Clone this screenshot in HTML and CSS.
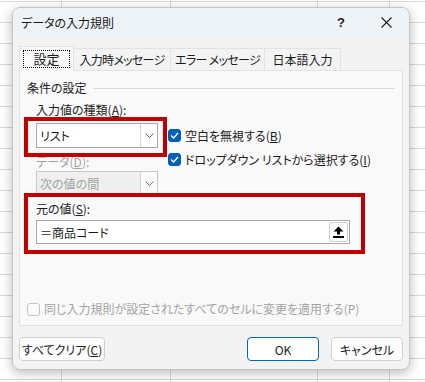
FILE: index.html
```html
<!DOCTYPE html>
<html lang="ja">
<head>
  <meta charset="UTF-8" />
  <meta name="viewport" content="width=device-width, initial-scale=1.0">
  <title>データの入力規則</title>
  <link rel="stylesheet" href="styles.css">
</head>
<body>

<div class="dialog">
  <div class="titlebar">
    <span class="title">データの入力規則</span>
    <span class="help">?</span>
    <span class="close">
      <svg width="11" height="11" viewBox="0 0 11 11"><path d="M0.5 0.5 L10.5 10.5 M10.5 0.5 L0.5 10.5" stroke="#1b1b1b" stroke-width="1.1" fill="none"/></svg>
    </span>
  </div>

  <div class="body">
    <div class="tabs">
      <div class="tab active"><span class="focus">設定</span></div>
      <div class="tab tab-input">入力時メッセージ</div>
      <div class="tab tab-error">エラー メッセージ</div>
      <div class="tab tab-ime">日本語入力</div>
    </div>

    <div class="panel">
      <div class="group-title"><span>条件の設定</span></div>

      <div class="criteria">
        <div class="lbl lbl-type">入力値の種類(<u>A</u>):</div>
        <div class="combo combo-type">
          <span class="combo-text">リスト</span>
          <span class="combo-btn">
            <svg width="9" height="5" viewBox="0 0 9 5"><path d="M0.5 0.5 L4.5 4.5 L8.5 0.5" stroke="#606060" fill="none"/></svg>
          </span>
        </div>
        <div class="checks">
          <div class="check-row">
            <span class="box checked"><svg width="9" height="7" viewBox="0 0 9 7"><path d="M1 3.5 L3.5 6 L8 1" stroke="#fff" stroke-width="1.4" fill="none"/></svg></span>
            <span>空白を無視する(<u>B</u>)</span>
          </div>
          <div class="check-row">
            <span class="box checked"><svg width="9" height="7" viewBox="0 0 9 7"><path d="M1 3.5 L3.5 6 L8 1" stroke="#fff" stroke-width="1.4" fill="none"/></svg></span>
            <span>ドロップダウン リストから選択する(<u>I</u>)</span>
          </div>
        </div>
        <div class="lbl lbl-data disabled">データ(<u>D</u>):</div>
        <div class="combo combo-data disabled">
          <span class="combo-text">次の値の間</span>
          <span class="combo-btn">
            <svg width="9" height="5" viewBox="0 0 9 5"><path d="M0.5 0.5 L4.5 4.5 L8.5 0.5" stroke="#707070" fill="none"/></svg>
          </span>
        </div>
      </div>

      <div class="source">
        <div class="lbl">元の値(<u>S</u>):</div>
        <div class="field">
          <span class="field-text">＝商品コード</span>
          <span class="ref-btn">
            <svg width="11" height="12" viewBox="0 0 11 12"><polygon points="5.5,0.5 10.5,5.5 7,5.5 7,8.5 4,8.5 4,5.5 0.5,5.5" fill="#000"/><rect x="0" y="10" width="11" height="2" fill="#000"/></svg>
          </span>
        </div>
      </div>

      <div class="apply-all disabled">
        <span class="box"></span>
        <span>同じ入力規則が設定されたすべてのセルに変更を適用する(P)</span>
      </div>

      <div class="mark mark-type"></div>
      <div class="mark mark-source"></div>
    </div>

    <div class="buttons">
      <button class="btn btn-clear">すべてクリア(<u>C</u>)</button>
      <button class="btn btn-ok">OK</button>
      <button class="btn btn-cancel">キャンセル</button>
    </div>
  </div>
</div>

</body>
</html>
```

FILE: styles.css
```css
* { margin: 0; padding: 0; box-sizing: border-box; }
html, body {
  height: 100%;
  overflow: hidden;
}

body {
  font-family: "Noto Sans CJK JP", "Noto Sans", sans-serif;
  font-feature-settings: "palt" 1;
  font-size: 12px;
  color: #1b1b1b;
  background-color: #fff;
  /* spreadsheet grid behind the dialog */
  background-image:
    linear-gradient(#dadada, #dadada),
    linear-gradient(#dadada, #dadada),
    linear-gradient(#dadada, #dadada),
    linear-gradient(#dadada, #dadada),
    repeating-linear-gradient(#dadada 0 1px, transparent 1px 21px);
  background-size: 1px 100%, 1px 100%, 1px 100%, 1px 100%, 100% 100%;
  background-position: 61px 0, 170px 0, 317px 0, 389px 0, 0 1px;
  background-repeat: no-repeat, no-repeat, no-repeat, no-repeat, repeat;
}

.dialog {
  margin: 7px 0 0 12px;
  width: 398px;
  height: 363px;
  background: #f3f3f3;
  border: 1px solid #c6c6c6;
  border-radius: 8px;
  box-shadow: 0 3px 12px rgba(0,0,0,0.28);
  overflow: hidden;
}

.titlebar {
  height: 29px;
  background: #eef3f7;
  display: flex;
  align-items: center;
  padding-left: 8px;
}
.title { flex: 1; }
.help {
  width: 16px;
  text-align: center;
  font-family: "Liberation Sans", sans-serif;
  font-size: 13px;
  font-weight: bold;
  margin-right: 32px;
}
.close {
  width: 11px;
  height: 11px;
  display: flex;
  margin-right: 17px;
}

.body {
  padding: 9px 0 0 6px;
}

.tabs {
  display: flex;
  align-items: flex-end;
  height: 24px;
}
.tab {
  height: 22px;
  line-height: 21px;
  text-align: center;
  letter-spacing: -0.7px;
  background: #f3f3f3;
  border: 1px solid #e2e2e2;
  border-bottom: none;
  margin-right: -1px;
  white-space: nowrap;
}
.tab-input { width: 98px; }
.tab-error { width: 95px; }
.tab-ime { width: 77px; letter-spacing: 0; }
.tab.active {
  height: 25px;
  margin-bottom: -1px;
  width: 55px;
  padding: 3px 3px 0;
  letter-spacing: 0;
  background: #f9f9f9;
  position: relative;
  z-index: 1;
}
.focus {
  display: block;
  height: 18px;
  line-height: 16px;
  text-align: center;
  border: 1px dotted #000;
  font-size: 13px;
}

.panel {
  position: relative;
  width: 384px;
  height: 256px;
  background: #f9f9f9;
  border: 1px solid #e2e2e2;
  padding-top: 9px;
}

.group-title {
  display: flex;
  align-items: center;
  padding-left: 7px;
  line-height: 16px;
  gap: 6px;
}
.group-title::after {
  content: "";
  flex: 1;
  height: 1px;
  background: #dcdcdc;
  margin-right: 7px;
}

.lbl { line-height: 16px; white-space: nowrap; }
.disabled { color: #a3a3a3; }

.criteria {
  display: grid;
  grid-template-columns: 122px auto;
  column-gap: 10px;
  padding-left: 16px;
  margin-top: 6px;
}
.lbl-type { grid-column: 1 / 3; margin-bottom: 5px; }
.checks { grid-column: 2; grid-row: 2 / 4; }
.lbl-data { grid-column: 1; padding: 5px 0 1px; }
.combo-data { grid-column: 1; }

.combo {
  height: 25px;
  display: flex;
  background: #fff;
  border: 1px solid #a9a9a9;
}
.combo-text {
  flex: 1;
  line-height: 23px;
  padding-left: 3px;
}
.combo-btn {
  width: 17px;
  border-left: 1px solid #d4d4d4;
  display: flex;
  align-items: center;
  justify-content: center;
}
.combo.disabled {
  background: #efefef;
  border-color: #cacaca;
}
.combo.disabled .combo-btn { background: #fafafa; }

.check-row {
  height: 24px;
  display: flex;
  align-items: center;
  gap: 4px;
  white-space: nowrap;
}
.box {
  width: 13px;
  height: 13px;
  border: 1px solid #b8b8b8;
  border-radius: 3px;
  background: #fbfbfb;
  display: flex;
  align-items: center;
  justify-content: center;
}
.box.checked {
  background: #005fb8;
  border-color: #005fb8;
}

.source {
  padding-left: 16px;
  margin-top: 5px;
}
.source .lbl { margin-bottom: 3px; }
.field {
  width: 314px;
  height: 24px;
  display: flex;
  align-items: center;
  background: #fff;
  border: 1px solid #a9a9a9;
}
.field-text {
  flex: 1;
  padding-left: 3px;
}
.ref-btn {
  width: 19px;
  height: 20px;
  margin-right: 1px;
  border: 1px solid #cfcfcf;
  border-radius: 3px;
  background: #fdfdfd;
  display: flex;
  align-items: center;
  justify-content: center;
}

.apply-all {
  display: flex;
  align-items: center;
  gap: 4px;
  padding-left: 7px;
  margin-top: 57px;
  line-height: 16px;
  white-space: nowrap;
}
.apply-all .box { border-color: #c4c4c4; }

/* red annotation frames drawn over the form */
.mark {
  position: absolute;
  left: 4px;
  border: 4px solid #c00000;
}
.mark-type { top: 46px; width: 143px; height: 40px; }
.mark-source { top: 122px; width: 341px; height: 61px; }

.buttons {
  display: flex;
  margin-top: 11px;
  width: 384px;
}
.btn {
  height: 24px;
  width: 72px;
  font-family: inherit;
  font-size: 12px;
  font-feature-settings: "palt" 1;
  color: #1b1b1b;
  background: #fdfdfd;
  border: 1px solid #d0d0d0;
  border-radius: 4px;
}
.btn-clear { width: 86px; }
.btn-ok {
  margin-left: auto;
  border-color: #0067c0;
}
.btn-cancel { margin-left: 12px; }
```
